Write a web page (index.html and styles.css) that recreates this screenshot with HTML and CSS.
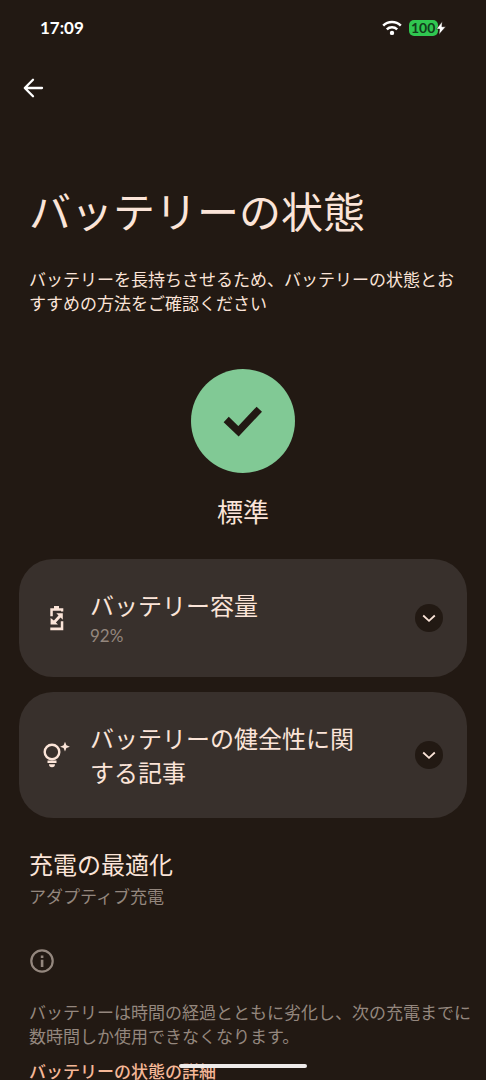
FILE: index.html
```html
<!DOCTYPE html>
<html lang="ja">
<head>
  <meta charset="utf-8">
  <meta name="viewport" content="width=device-width, initial-scale=1">
  <title>バッテリーの状態</title>
  <link rel="stylesheet" href="styles.css">
</head>
<body>
  <div class="status-bar">
    <time class="clock">17:09</time>
    <div class="status-icons">
      <svg class="wifi" viewBox="0 0 20 16" aria-label="Wi-Fi">
        <path d="M1.2 5.6a12.6 12.6 0 0 1 17.6 0M4.8 9.4a7.6 7.6 0 0 1 10.4 0" fill="none" stroke="currentColor" stroke-width="2.5"/>
        <circle cx="10" cy="12.9" r="2.2" fill="currentColor"/>
      </svg>
      <span class="battery"><span class="battery-level">100</span>
        <svg class="bolt" viewBox="0 0 10 14" aria-hidden="true"><path d="M6.200 .5.400 8.100h3.200L3 13.500 9.700 5.700H5.900z" fill="#fff" stroke="#221913" stroke-width=".5"/></svg>
      </span>
    </div>
  </div>

  <header class="toolbar">
    <button class="back" type="button" aria-label="戻る">
      <svg viewBox="0 0 24 24"><path d="M21 12H4M12 3.800 3.800 12l8.200 8.200" fill="none" stroke="currentColor" stroke-width="2.300" stroke-linecap="round" stroke-linejoin="round"/></svg>
    </button>
  </header>

  <main>
    <section class="intro">
      <h1>バッテリーの状態</h1>
      <p>バッテリーを長持ちさせるため、バッテリーの状態とおすすめの方法をご確認ください</p>
    </section>

    <section class="health">
      <div class="health-badge">
        <svg viewBox="0 0 40 32" aria-hidden="true"><path d="M3.200 14.500 15.500 26.300 36.300 4.200" fill="none" stroke="currentColor" stroke-width="7.400"/></svg>
      </div>
      <p class="health-label">標準</p>
    </section>

    <div class="cards">
      <button class="card" type="button" aria-expanded="false">
        <svg class="card-icon" viewBox="0 0 28 28" aria-hidden="true">
          <path d="M11 2h5v2.200h4.300v3.400H18V6.700H9.800v5.600H7.300V4.200H11zM7.300 26.200v-2.600h10.500v-6.400h2.500v9z" fill="currentColor"/>
          <path d="M13.300 9.200h6.500v6.500l-2.200-2.200-4.700 4.900 2.100 2.200H7.600v-6.500l3.300 2.300 4.600-5z" fill="currentColor"/>
        </svg>
        <span class="card-text"><span class="card-title">バッテリー容量</span><span class="card-value">92%</span></span>
        <span class="chevron"><svg viewBox="0 0 14 14"><path d="m1.200 4.500 5.800 5.300 5.800-5.300" fill="none" stroke="currentColor" stroke-width="1.800"/></svg></span>
      </button>
      <button class="card" type="button" aria-expanded="false">
        <svg class="card-icon" viewBox="0 0 28 28" aria-hidden="true">
          <circle cx="9" cy="11" r="7.300" fill="none" stroke="currentColor" stroke-width="2.400"/>
          <path d="M4.500 19.500h9v2.500h-9zM6 23.300h6a3 3 0 0 1-6 0zM22 .800l1.400 3.500 3.500 1.400-3.500 1.400L22 10.600l-1.400-3.500-3.500-1.400 3.500-1.400z" fill="currentColor"/>
        </svg>
        <span class="card-text"><span class="card-title">バッテリーの健全性に関する記事</span></span>
        <span class="chevron"><svg viewBox="0 0 14 14"><path d="m1.200 4.500 5.800 5.300 5.800-5.300" fill="none" stroke="currentColor" stroke-width="1.800"/></svg></span>
      </button>
    </div>

    <section class="preference">
      <h2>充電の最適化</h2>
      <p>アダプティブ充電</p>
    </section>

    <footer class="note">
      <svg class="info" viewBox="0 0 26 26" aria-hidden="true">
        <circle cx="13" cy="13" r="10.700" fill="none" stroke="currentColor" stroke-width="2.200"/>
        <path d="M11.800 11.700h2.600v7.200h-2.600zM11.800 7.400h2.600v2.500h-2.600z" fill="currentColor"/>
      </svg>
      <p>バッテリーは時間の経過とともに劣化し、次の充電までに数時間しか使用できなくなります。</p>
      <a href="#">バッテリーの状態の詳細</a>
    </footer>
  </main>

  <div class="home-indicator"></div>
</body>
</html>
```
FILE: styles.css
```css
:root {
  --background: #221913;
  --surface: #38302c;
  --text: #fbe4d8;
  --muted: #94877e;
  --link: #f5b797;
  scrollbar-width: none;
  background: var(--background);
}

* {
  box-sizing: border-box;
}

body {
  margin: 0;
  color: var(--text);
  font-family: "Noto Sans CJK JP", sans-serif;
  font-size: 17px;
  line-height: 24px;
}

h1, h2, p {
  margin: 0;
  font-weight: 400;
}

svg {
  display: block;
}

button {
  margin: 0;
  border: 0;
  color: inherit;
  font: inherit;
  text-align: left;
}

.status-bar {
  display: flex;
  align-items: center;
  justify-content: space-between;
  height: 56px;
  padding: 0 40px;
  color: #fff;
  font-family: Lato, sans-serif;
}

.clock {
  font-weight: 700;
}

.status-icons {
  display: flex;
  align-items: center;
  gap: 7px;
}

.wifi {
  width: 20px;
  height: 16px;
}

.battery {
  display: flex;
  align-items: center;
  position: relative;
  padding-right: 8px;
}

.battery-level {
  width: 29px;
  padding-left: 2px;
  border-radius: 5px;
  background: #30c750;
  color: #123d1b;
  font-size: 14px;
  font-weight: 700;
  line-height: 16px;
}

.bolt {
  position: absolute;
  right: 0;
  width: 10px;
  height: 14px;
}

.toolbar {
  padding: 20px 21px;
}

.back {
  display: block;
  padding: 0;
  background: none;
  color: #fff;
}

.back svg {
  width: 24px;
  height: 24px;
}

.intro {
  padding: 58px 29px 0;
}

h1 {
  margin-bottom: 25px;
  font-size: 42px;
  line-height: 64px;
}

.health {
  display: flex;
  flex-direction: column;
  align-items: center;
  gap: 19px;
  padding: 54px 0 29px;
}

.health-badge {
  display: grid;
  place-items: center;
  width: 104px;
  height: 104px;
  border-radius: 50%;
  background: #81c995;
  color: var(--background);
}

.health-badge svg {
  width: 40px;
  height: 32px;
}

.health-label {
  font-size: 26px;
  line-height: 38px;
}

.cards {
  display: grid;
  gap: 15px;
  padding: 0 19px;
}

.card {
  display: flex;
  align-items: center;
  padding: 29px 24px;
  border-radius: 34px;
  background: var(--surface);
}

.card-icon {
  flex: none;
  width: 28px;
  height: 28px;
  margin-right: 19px;
}

.card-text {
  display: flex;
  flex: 1;
  flex-direction: column;
  gap: 2px;
  margin-right: 40px;
}

.card-title {
  font-size: 24px;
  line-height: 34px;
}

.card-value {
  color: var(--muted);
  font-family: Lato, sans-serif;
}

.chevron {
  display: grid;
  flex: none;
  place-items: center;
  width: 28px;
  height: 28px;
  border-radius: 50%;
  background: var(--background);
}

.chevron svg {
  width: 14px;
  height: 14px;
}

.preference {
  padding: 29px 29px 0;
}

h2 {
  margin-bottom: 3px;
  font-size: 24px;
  line-height: 34px;
}

.preference p {
  color: var(--muted);
}

.note {
  padding: 40px 12px 24px 29px;
  color: var(--muted);
}

.info {
  width: 26px;
  height: 26px;
  margin-bottom: 26px;
}

.note a {
  display: inline-block;
  margin-top: 11px;
  color: var(--link);
  font-weight: 500;
  text-decoration: none;
}

.home-indicator {
  position: fixed;
  bottom: 12px;
  left: 50%;
  width: 128px;
  height: 4px;
  margin-left: -64px;
  border-radius: 2px;
  background: #eeebea;
}
```
